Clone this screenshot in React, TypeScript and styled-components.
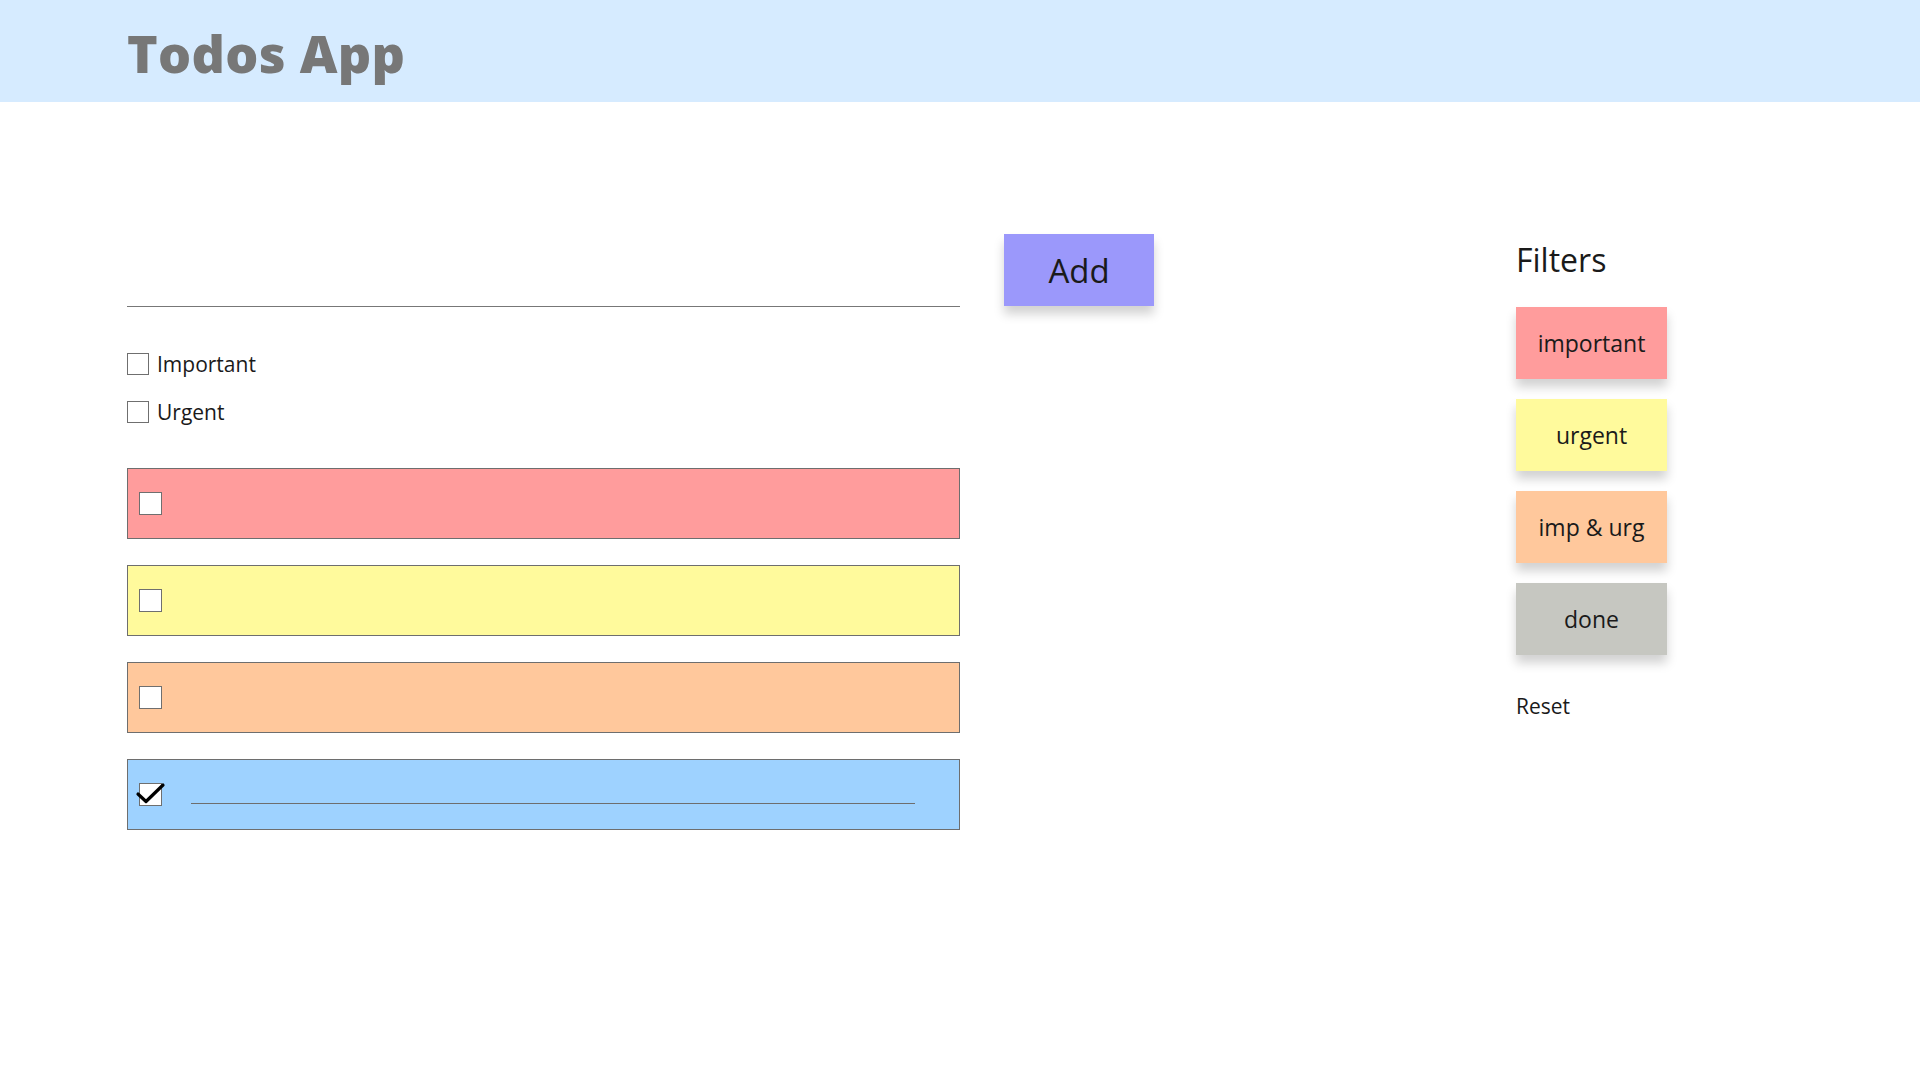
import React from "react";
import styled, { createGlobalStyle } from "styled-components";

const Global = createGlobalStyle`
  html, body { margin: 0; padding: 0; background: #ffffff; }
  body { font-family: "Open Sans", "Liberation Sans", sans-serif; color: #1a1a1a; }
  * { box-sizing: border-box; }
`;

const Header = styled.header`
  height: 102px;
  background: #d6ebff;
  display: flex;
  align-items: center;
  padding-left: 127px;
`;

const Title = styled.h1`
  margin: 0;
  font-family: "Open Sans", "Liberation Sans", sans-serif;
  font-weight: 800;
  font-size: 52px;
  letter-spacing: 0.3px;
  color: #777777;
  line-height: 1;
  padding-top: 4px;
`;

const Main = styled.main`
  display: flex;
  padding: 132px 0 0 127px;
`;

const LeftColumn = styled.section`
  width: 833px;
  display: flex;
  flex-direction: column;
`;

const TodoInput = styled.input`
  height: 73px;
  width: 100%;
  border: none;
  border-bottom: 1px solid #777777;
  background: transparent;
  outline: none;
  font: inherit;
  font-size: 22px;
`;

const Options = styled.div`
  display: flex;
  flex-direction: column;
  gap: 26px;
  margin-top: 46px;
`;

const OptionLabel = styled.label`
  display: flex;
  align-items: center;
  gap: 8px;
  font-size: 21px;
  color: #1a1a1a;
  height: 22px;
`;

const Box = styled.span<{ $size: number }>`
  width: ${(p) => p.$size}px;
  height: ${(p) => p.$size}px;
  border: 1px solid #6f6f6f;
  background: #ffffff;
  flex: none;
  position: relative;
`;

const TodoList = styled.div`
  display: flex;
  flex-direction: column;
  gap: 26px;
  margin-top: 45px;
`;

const TodoItem = styled.div<{ $bg: string }>`
  height: 71px;
  border: 1px solid #6e6e6e;
  background: ${(p) => p.$bg};
  display: flex;
  align-items: center;
  padding-left: 11px;
`;

const Check = styled.svg`
  position: absolute;
  left: -3px;
  top: -2px;
  overflow: visible;
`;

const DoneText = styled.div`
  margin-left: 29px;
  width: 724px;
  height: 19px;
  border-bottom: 1px solid #6e6e6e;
`;

const AddButton = styled.button`
  margin-left: 44px;
  width: 150px;
  height: 72px;
  background: #9b98fb;
  border: none;
  font-family: "Open Sans", "Liberation Sans", sans-serif;
  font-size: 33px;
  color: #1a1a1a;
  box-shadow: 0 8px 10px rgba(0, 0, 0, 0.18);
  cursor: pointer;
  flex: none;
  align-self: flex-start;
`;

const FilterColumn = styled.aside`
  margin-left: 362px;
  width: 152px;
  display: flex;
  flex-direction: column;
`;

const FiltersTitle = styled.h2`
  margin: 0;
  padding-top: 4px;
  font-weight: 400;
  font-size: 32px;
  line-height: 44px;
  height: 73px;
  color: #1a1a1a;
`;

const FilterList = styled.div`
  display: flex;
  flex-direction: column;
  gap: 20px;
`;

const FilterButton = styled.button<{ $bg: string }>`
  width: 151px;
  height: 72px;
  border: none;
  background: ${(p) => p.$bg};
  font-family: "Open Sans", "Liberation Sans", sans-serif;
  font-size: 23px;
  color: #1a1a1a;
  box-shadow: 0 8px 10px rgba(0, 0, 0, 0.18);
  cursor: pointer;
`;

const ResetLink = styled.div`
  margin-top: 37px;
  font-size: 21px;
  color: #1a1a1a;
`;

const todos = [
  { bg: "#ff9c9c", done: false },
  { bg: "#fffa9c", done: false },
  { bg: "#ffc89c", done: false },
  { bg: "#9ed2ff", done: true },
];

const filters = [
  { label: "important", bg: "#ff9c9c" },
  { label: "urgent", bg: "#fffa9c" },
  { label: "imp & urg", bg: "#ffc89c" },
  { label: "done", bg: "#c6c7c1" },
];

export default function App() {
  return (
    <>
      <Global />
      <Header>
        <Title>Todos App</Title>
      </Header>
      <Main>
        <LeftColumn>
          <TodoInput aria-label="new todo" />
          <Options>
            <OptionLabel>
              <Box $size={22} />
              Important
            </OptionLabel>
            <OptionLabel>
              <Box $size={22} />
              Urgent
            </OptionLabel>
          </Options>
          <TodoList>
            {todos.map((t, i) => (
              <TodoItem key={i} $bg={t.bg}>
                <Box $size={23}>
                  {t.done && (
                    <Check width="28" height="24" viewBox="0 0 28 24">
                      <path
                        d="M1 12 L9 19.5 L26 3"
                        fill="none"
                        stroke="#000"
                        strokeWidth="3.2"
                        strokeLinecap="round"
                        strokeLinejoin="round"
                      />
                    </Check>
                  )}
                </Box>
                {t.done && <DoneText />}
              </TodoItem>
            ))}
          </TodoList>
        </LeftColumn>
        <AddButton>Add</AddButton>
        <FilterColumn>
          <FiltersTitle>Filters</FiltersTitle>
          <FilterList>
            {filters.map((f) => (
              <FilterButton key={f.label} $bg={f.bg}>
                {f.label}
              </FilterButton>
            ))}
          </FilterList>
          <ResetLink>Reset</ResetLink>
        </FilterColumn>
      </Main>
    </>
  );
}
